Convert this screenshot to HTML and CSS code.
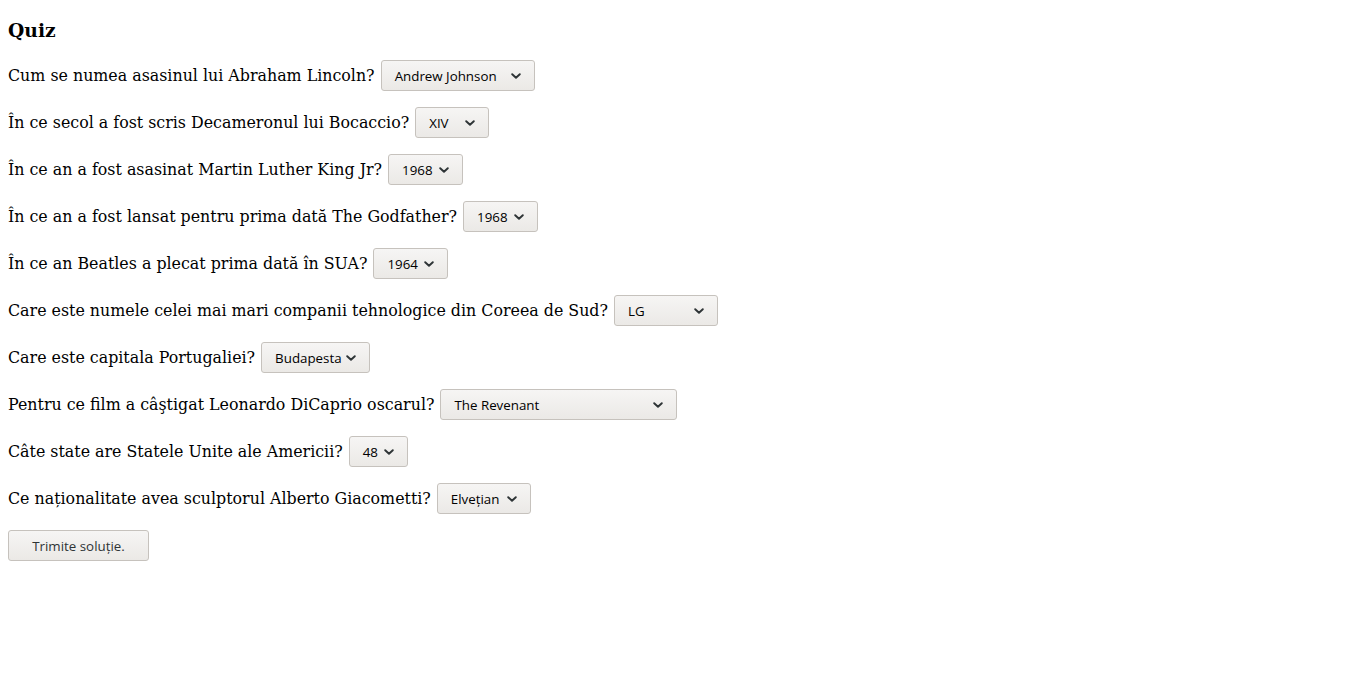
FILE: index.html
```html
<!DOCTYPE html>
<html lang="ro">
<head>
<meta charset="utf-8">
<title>Quiz</title>
<link rel="stylesheet" href="styles.css">
</head>
<body>
<h1 class="title">Quiz</h1>
<form class="quiz">
  <div class="question"><span class="q-text">Cum se numea asasinul lui Abraham Lincoln?</span><span class="select w-154"><span class="select-value">Andrew Johnson</span><svg class="chevron" viewBox="0 0 10 6"><path d="M1.2 1.2l3.8 3.6 3.8-3.6"/></svg></span></div>
  <div class="question"><span class="q-text">În ce secol a fost scris Decameronul lui Bocaccio?</span><span class="select w-74"><span class="select-value">XIV</span><svg class="chevron" viewBox="0 0 10 6"><path d="M1.2 1.2l3.8 3.6 3.8-3.6"/></svg></span></div>
  <div class="question"><span class="q-text">În ce an a fost asasinat Martin Luther King Jr?</span><span class="select w-75"><span class="select-value">1968</span><svg class="chevron" viewBox="0 0 10 6"><path d="M1.2 1.2l3.8 3.6 3.8-3.6"/></svg></span></div>
  <div class="question"><span class="q-text">În ce an a fost lansat pentru prima dată The Godfather?</span><span class="select w-75"><span class="select-value">1968</span><svg class="chevron" viewBox="0 0 10 6"><path d="M1.2 1.2l3.8 3.6 3.8-3.6"/></svg></span></div>
  <div class="question"><span class="q-text">În ce an Beatles a plecat prima dată în SUA?</span><span class="select w-75"><span class="select-value">1964</span><svg class="chevron" viewBox="0 0 10 6"><path d="M1.2 1.2l3.8 3.6 3.8-3.6"/></svg></span></div>
  <div class="question"><span class="q-text">Care este numele celei mai mari companii tehnologice din Coreea de Sud?</span><span class="select w-104"><span class="select-value">LG</span><svg class="chevron" viewBox="0 0 10 6"><path d="M1.2 1.2l3.8 3.6 3.8-3.6"/></svg></span></div>
  <div class="question"><span class="q-text">Care este capitala Portugaliei?</span><span class="select w-109"><span class="select-value">Budapesta</span><svg class="chevron" viewBox="0 0 10 6"><path d="M1.2 1.2l3.8 3.6 3.8-3.6"/></svg></span></div>
  <div class="question"><span class="q-text">Pentru ce film a câştigat Leonardo DiCaprio oscarul?</span><span class="select w-237"><span class="select-value">The Revenant</span><svg class="chevron" viewBox="0 0 10 6"><path d="M1.2 1.2l3.8 3.6 3.8-3.6"/></svg></span></div>
  <div class="question"><span class="q-text">Câte state are Statele Unite ale Americii?</span><span class="select w-59"><span class="select-value">48</span><svg class="chevron" viewBox="0 0 10 6"><path d="M1.2 1.2l3.8 3.6 3.8-3.6"/></svg></span></div>
  <div class="question"><span class="q-text">Ce naționalitate avea sculptorul Alberto Giacometti?</span><span class="select w-94"><span class="select-value">Elvețian</span><svg class="chevron" viewBox="0 0 10 6"><path d="M1.2 1.2l3.8 3.6 3.8-3.6"/></svg></span></div>
  <div class="actions"><span class="submit">Trimite soluție.</span></div>
</form>
</body>
</html>
```
FILE: styles.css
```css
html, body {
  margin: 0;
  padding: 0;
  background: #ffffff;
}
body {
  padding: 8px;
  font-family: "DejaVu Serif", serif;
  font-size: 15.85px;
  color: #000000;
}
.title {
  font-family: "DejaVu Serif", serif;
  font-size: 18.72px;
  font-weight: bold;
  margin: 11px 0 0 0;
  line-height: 22px;
}
.quiz {
  display: flex;
  flex-direction: column;
  gap: 16px;
  margin-top: 19px;
}
.question {
  display: flex;
  align-items: center;
  gap: 6px;
  height: 31px;
}
.q-text {
  white-space: nowrap;
}
.select {
  box-sizing: border-box;
  height: 31px;
  display: flex;
  align-items: center;
  justify-content: space-between;
  padding: 0 13px 0 13px;
  border: 1px solid #c6c2bd;
  border-radius: 3px;
  background: linear-gradient(#f6f5f4, #ebe9e6);
  font-family: "Open Sans", "Noto Sans", sans-serif;
  font-size: 13.33px;
  color: #000;
}
.select-value {
  white-space: nowrap;
  padding-top: 1px;
}
.chevron {
  width: 10px;
  height: 6px;
  flex: none;
  fill: none;
  stroke: #2e3436;
  stroke-width: 1.9;
  stroke-linecap: round;
  stroke-linejoin: round;
}
.w-154 { width: 154px; }
.w-74 { width: 74px; }
.w-75 { width: 75px; }
.w-104 { width: 104px; }
.w-109 { width: 109px; }
.w-237 { width: 237px; }
.w-59 { width: 59px; }
.w-94 { width: 94px; }
.actions {
  display: flex;
}
.submit {
  box-sizing: border-box;
  width: 141px;
  height: 31px;
  display: flex;
  align-items: center;
  justify-content: center;
  border: 1px solid #c6c2bd;
  border-radius: 3px;
  background: linear-gradient(#f6f5f4, #ebe9e6);
  font-family: "Open Sans", "Noto Sans", sans-serif;
  font-size: 13.33px;
  color: #2e3436;
}
```
